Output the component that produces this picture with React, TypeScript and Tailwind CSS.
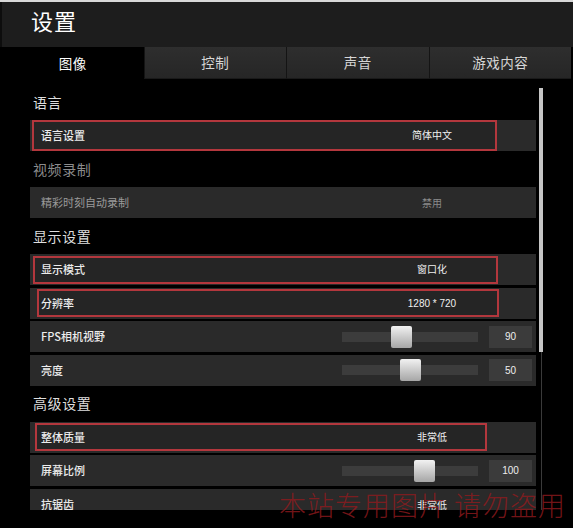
import React from 'react';

const TABS = ['图像', '控制', '声音', '游戏内容'];

function Heading({ children, dim }: { children: React.ReactNode; dim?: boolean }) {
  return (
    <div
      className={`h-[36px] shrink-0 flex items-center pl-[3px] text-[14px] tracking-[0.6px] ${
        dim ? 'text-[#8c8c8c]' : 'text-[#dedede]'
      }`}
    >
      {children}
    </div>
  );
}

function PlainRow({ label, value, dim }: { label: string; value: string; dim?: boolean }) {
  return (
    <div className="h-[31px] shrink-0 bg-[#2a2a2a] flex items-center">
      <span className={`w-[352px] shrink-0 pl-[11px] text-[11px] ${dim ? 'text-[#9a9a9a]' : 'text-[#e8e8e8] font-medium'}`}>
        {label}
      </span>
      <span className={`w-[100px] shrink-0 text-center text-[10px] ${dim ? 'text-[#8a8a8a]' : 'text-[#eeeeee]'}`}>{value}</span>
    </div>
  );
}

function BoxRow({
  label,
  value,
  boxClass,
  labelClass,
}: {
  label: string;
  value: string;
  boxClass: string;
  labelClass: string;
}) {
  return (
    <div className="h-[31px] shrink-0 bg-[#2a2a2a] flex items-center">
      <div className={`shrink-0 border-2 border-[#b3373d] bg-[#252525] flex items-center ${boxClass}`}>
        <span className={`shrink-0 text-[11px] font-medium text-[#ececec] ${labelClass}`}>{label}</span>
        <span className="w-[100px] shrink-0 text-center text-[10px] text-[#f0f0f0] font-['Liberation_Sans','Noto_Sans_CJK_SC',sans-serif]">
          {value}
        </span>
      </div>
    </div>
  );
}

function SliderRow({ label, thumb, num }: { label: string; thumb: number; num: string }) {
  return (
    <div className="h-[31px] shrink-0 bg-[#2a2a2a] flex items-center">
      <span className="w-[312px] shrink-0 pl-[11px] text-[11px] font-medium text-[#ececec]">{label}</span>
      <div className="relative w-[136px] shrink-0 h-[10px] bg-[#3c3c3c]">
        <div
          className="absolute top-1/2 -translate-y-1/2 w-[21px] h-[22px] rounded-[2px] bg-linear-to-b from-[#f2f2f2] to-[#a6a6a6]"
          style={{ left: thumb }}
        />
      </div>
      <div className="ml-[11px] shrink-0 w-[43px] h-[22px] bg-[#3b3b3b] flex items-center justify-center text-[10px] text-[#eeeeee] font-['Liberation_Sans',sans-serif]">
        {num}
      </div>
    </div>
  );
}

export default function App() {
  return (
    <div className="relative w-[573px] h-[528px] overflow-hidden bg-black font-['Noto_Sans_CJK_SC','Liberation_Sans',sans-serif]">
      <div className="h-[2px] bg-[#d8d8d8]" />
      <header className="h-[45px] bg-[#1d1d1d] border-l-2 border-[#0d0d0d] pl-[29px] pb-[8px] flex items-center text-[22px] text-white tracking-[1px]">
        设置
      </header>
      <nav className="flex h-[32px] pl-[2px] pr-[2px]">
        {TABS.map((t, i) => (
          <div
            key={t}
            className={`flex-1 flex items-center justify-center text-[13.5px] tracking-[0.5px] ${
              i === 0
                ? 'bg-black text-white'
                : 'bg-linear-to-b from-[#2e2e2e] to-[#262626] text-[#d6d6d6] border-l border-[#141414] border-b border-b-[#1a1a1a]'
            }`}
          >
            {t}
          </div>
        ))}
      </nav>

      <div className="flex h-[431px] overflow-hidden pl-[30px]">
        <div className="w-[506px] shrink-0 flex flex-col pt-[5px]">
          <Heading>语言</Heading>
          <BoxRow label="语言设置" value="简体中文" boxClass="ml-[2px] w-[465px] h-[31px]" labelClass="w-[348px] pl-[7px]" />
          <Heading dim>视频录制</Heading>
          <PlainRow label="精彩时刻自动录制" value="禁用" dim />
          <Heading>显示设置</Heading>
          <div className="flex flex-col shrink-0 gap-[2.5px]">
            <BoxRow label="显示模式" value="窗口化" boxClass="ml-[3px] w-[465px] h-[28px]" labelClass="w-[347px] pl-[6px]" />
            <BoxRow label="分辨率" value="1280 * 720" boxClass="ml-[7px] w-[462px] h-[28px]" labelClass="w-[343px] pl-[2px]" />
            <SliderRow label="FPS相机视野" thumb={49} num="90" />
            <SliderRow label="亮度" thumb={58} num="50" />
          </div>
          <Heading>高级设置</Heading>
          <div className="flex flex-col shrink-0 gap-[2.5px]">
            <BoxRow label="整体质量" value="非常低" boxClass="ml-[5px] w-[452px] h-[28px]" labelClass="w-[345px] pl-[4px]" />
            <SliderRow label="屏幕比例" thumb={72} num="100" />
            <PlainRow label="抗锯齿" value="非常低" />
          </div>
        </div>
        <div className="ml-[3px] w-[4px] shrink-0 flex flex-col items-center pt-[9px]">
          <div className="w-[4px] h-[264px] bg-[#c6c6c6] shrink-0" />
          <div className="w-[1px] flex-1 bg-[#3a3a3a]" />
        </div>
      </div>

      <div className="absolute left-[279px] top-[491px] whitespace-nowrap leading-none text-[27px] tracking-[1px] text-[#921a1e]/80 font-light">
        本站专用图片 请勿盗用
      </div>
    </div>
  );
}
